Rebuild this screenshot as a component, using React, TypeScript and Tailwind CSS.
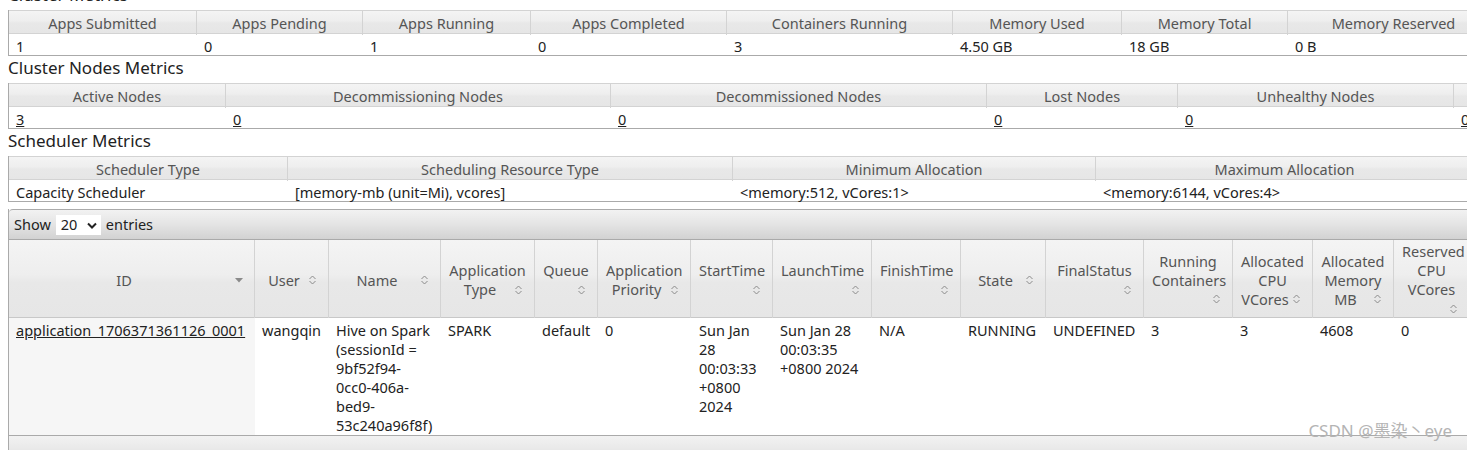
import type { ReactNode } from 'react';

const headBg = 'bg-[linear-gradient(to_bottom,#f4f4f4_0%,#eeeeee_45%,#e8e8e8_55%,#e6e6e6_100%)]';
const barBg = 'bg-[linear-gradient(to_bottom,#f2f2f2_0%,#e4e4e4_50%,#d2d2d2_100%)]';

function SortBoth() {
  return (
    <svg width="7" height="10" viewBox="0 0 7 10" fill="none" stroke="#8a8a8a" strokeWidth="1">
      <path d="M0.5 4 3.5 1 6.5 4M0.5 6 3.5 9 6.5 6" />
    </svg>
  );
}

function SortDesc() {
  return (
    <svg width="8" height="5" viewBox="0 0 8 5">
      <path d="M0 0h8L4 4.5z" fill="#8a8a8a" />
    </svg>
  );
}

function Heading({ children }: { children: ReactNode }) {
  return <h3 className="mb-[4px] pt-[1px] text-[17px] leading-[22px] text-[#222]">{children}</h3>;
}

function MetricTable({ cols, heads, cells }: { cols: string; heads: string[]; cells: ReactNode[] }) {
  return (
    <div className="w-max border-b border-l border-[#aaa]">
      <div className={`grid ${cols} h-[24px] border-y border-[#d3d3d3] ${headBg}`}>
        {heads.map((h) => (
          <div key={h} className="flex items-center justify-center whitespace-nowrap border-r border-[#d3d3d3] pt-[2px] text-[#555]">
            {h}
          </div>
        ))}
      </div>
      <div className={`grid ${cols} h-[21px] leading-[19px]`}>
        {cells.map((c, i) => (
          <div key={i} className="whitespace-nowrap px-[7px] pt-[3px]">
            {c}
          </div>
        ))}
      </div>
    </div>
  );
}

function Th({ children, desc }: { children: ReactNode; desc?: boolean }) {
  return (
    <div className="flex items-center border-r border-[#d3d3d3] px-[8px] pt-[2px]">
      <div className="w-full text-center">
        {children}
        <span className="float-right flex h-[19px] w-[15px] items-center justify-center">
          {desc ? <SortDesc /> : <SortBoth />}
        </span>
      </div>
    </div>
  );
}

const link = (v: string) => <a className="underline">{v}</a>;

export default function App() {
  return (
    <div className="relative h-[450px] w-full overflow-hidden bg-white font-['Noto_Sans',sans-serif] text-[14.5px] text-[#222]">
      <div className="-mt-[17px] w-max pl-[8px]">
        <Heading>Cluster Metrics</Heading>
        <MetricTable
          cols="grid-cols-[188px_166px_168px_196px_226px_169px_166px_212px_170px_170px]"
          heads={[
            'Apps Submitted',
            'Apps Pending',
            'Apps Running',
            'Apps Completed',
            'Containers Running',
            'Memory Used',
            'Memory Total',
            'Memory Reserved',
            'VCores Used',
            'VCores Total',
          ]}
          cells={['1', '0', '1', '0', '3', '4.50 GB', '18 GB', '0 B', '3', '12']}
        />

        <Heading>Cluster Nodes Metrics</Heading>
        <MetricTable
          cols="grid-cols-[217px_385px_376px_191px_276px_200px_200px]"
          heads={[
            'Active Nodes',
            'Decommissioning Nodes',
            'Decommissioned Nodes',
            'Lost Nodes',
            'Unhealthy Nodes',
            'Rebooted Nodes',
            'Shutdown Nodes',
          ]}
          cells={['3', '0', '0', '0', '0', '0', '0'].map(link)}
        />

        <Heading>Scheduler Metrics</Heading>
        <MetricTable
          cols="grid-cols-[279px_445px_363px_378px_260px]"
          heads={[
            'Scheduler Type',
            'Scheduling Resource Type',
            'Minimum Allocation',
            'Maximum Allocation',
            'Maximum Cluster Application Priority',
          ]}
          cells={[
            'Capacity Scheduler',
            '[memory-mb (unit=Mi), vcores]',
            '<memory:512, vCores:1>',
            '<memory:6144, vCores:4>',
            '0',
          ]}
        />

        <div className="mt-[7px] w-max border-l border-[#aaa]">
          <div className={`flex h-[31px] items-center gap-[5px] rounded-tl-[4px] border-y border-[#aaa] pl-[5px] pt-[1px] ${barBg}`}>
            <span>Show</span>
            <span className="flex h-[20px] w-[45px] items-center justify-between bg-white pl-[5px] pr-[4px]">
              20
              <svg width="10" height="7" viewBox="0 0 10 7" fill="none" stroke="#222" strokeWidth="2">
                <path d="M1 1.5 5 5.5 9 1.5" />
              </svg>
            </span>
            <span>entries</span>
          </div>

          <div className={`grid h-[78px] grid-cols-[246px_74px_112px_94px_63px_93px_82px_99px_89px_85px_98px_89px_80px_81px_76px_90px_90px] border-b border-[#c8c8c8] leading-[19px] text-[#555] ${headBg}`}>
            <Th desc>ID</Th>
            <Th>User</Th>
            <Th>Name</Th>
            <Th>Application Type</Th>
            <Th>Queue</Th>
            <Th>Application Priority</Th>
            <Th>StartTime</Th>
            <Th>LaunchTime</Th>
            <Th>FinishTime</Th>
            <Th>State</Th>
            <Th>FinalStatus</Th>
            <Th>Running Containers</Th>
            <Th>Allocated CPU VCores</Th>
            <Th>Allocated Memory MB</Th>
            <Th>Reserved CPU VCores</Th>
            <Th>Reserved Memory MB</Th>
            <Th>% of Queue</Th>
          </div>

          <div className="grid h-[117px] grid-cols-[246px_74px_112px_94px_63px_93px_82px_99px_89px_85px_98px_89px_80px_81px_76px_90px_90px] leading-[19px]">
            <div className="bg-[#f6f6f6] px-[7px] pt-[3px]">{link('application_1706371361126_0001')}</div>
            <div className="px-[7px] pt-[3px]">wangqin</div>
            <div className="px-[7px] pt-[3px]">
              Hive on Spark
              <br />
              (sessionId =
              <br />
              9bf52f94-
              <br />
              0cc0-406a-
              <br />
              bed9-
              <br />
              53c240a96f8f)
            </div>
            <div className="px-[7px] pt-[3px]">SPARK</div>
            <div className="px-[7px] pt-[3px]">default</div>
            <div className="px-[7px] pt-[3px]">0</div>
            <div className="whitespace-nowrap px-[8px] pt-[3px]">
              Sun Jan
              <br />
              28
              <br />
              00:03:33
              <br />
              +0800
              <br />
              2024
            </div>
            <div className="whitespace-nowrap px-[7px] pt-[3px]">
              Sun Jan 28
              <br />
              00:03:35
              <br />
              +0800 2024
            </div>
            <div className="px-[7px] pt-[3px]">N/A</div>
            <div className="px-[7px] pt-[3px]">RUNNING</div>
            <div className="px-[7px] pt-[3px]">UNDEFINED</div>
            <div className="px-[7px] pt-[3px]">3</div>
            <div className="px-[7px] pt-[3px]">3</div>
            <div className="px-[7px] pt-[3px]">4608</div>
            <div className="px-[7px] pt-[3px]">0</div>
            <div className="px-[7px] pt-[3px]">0</div>
            <div className="px-[7px] pt-[3px]">100.0</div>
          </div>

          <div className={`h-[40px] border-t border-[#aaa] pl-[6px] pt-[9px] ${barBg}`}>Showing 1 to 1 of 1 entries</div>
        </div>
      </div>

      <div className="absolute bottom-[9px] right-[15px] font-['Noto_Sans','Noto_Sans_CJK_SC',sans-serif] text-[17px] leading-[20px] text-[#b4b4b4]">
        CSDN @墨染丶eye
      </div>
    </div>
  );
}
